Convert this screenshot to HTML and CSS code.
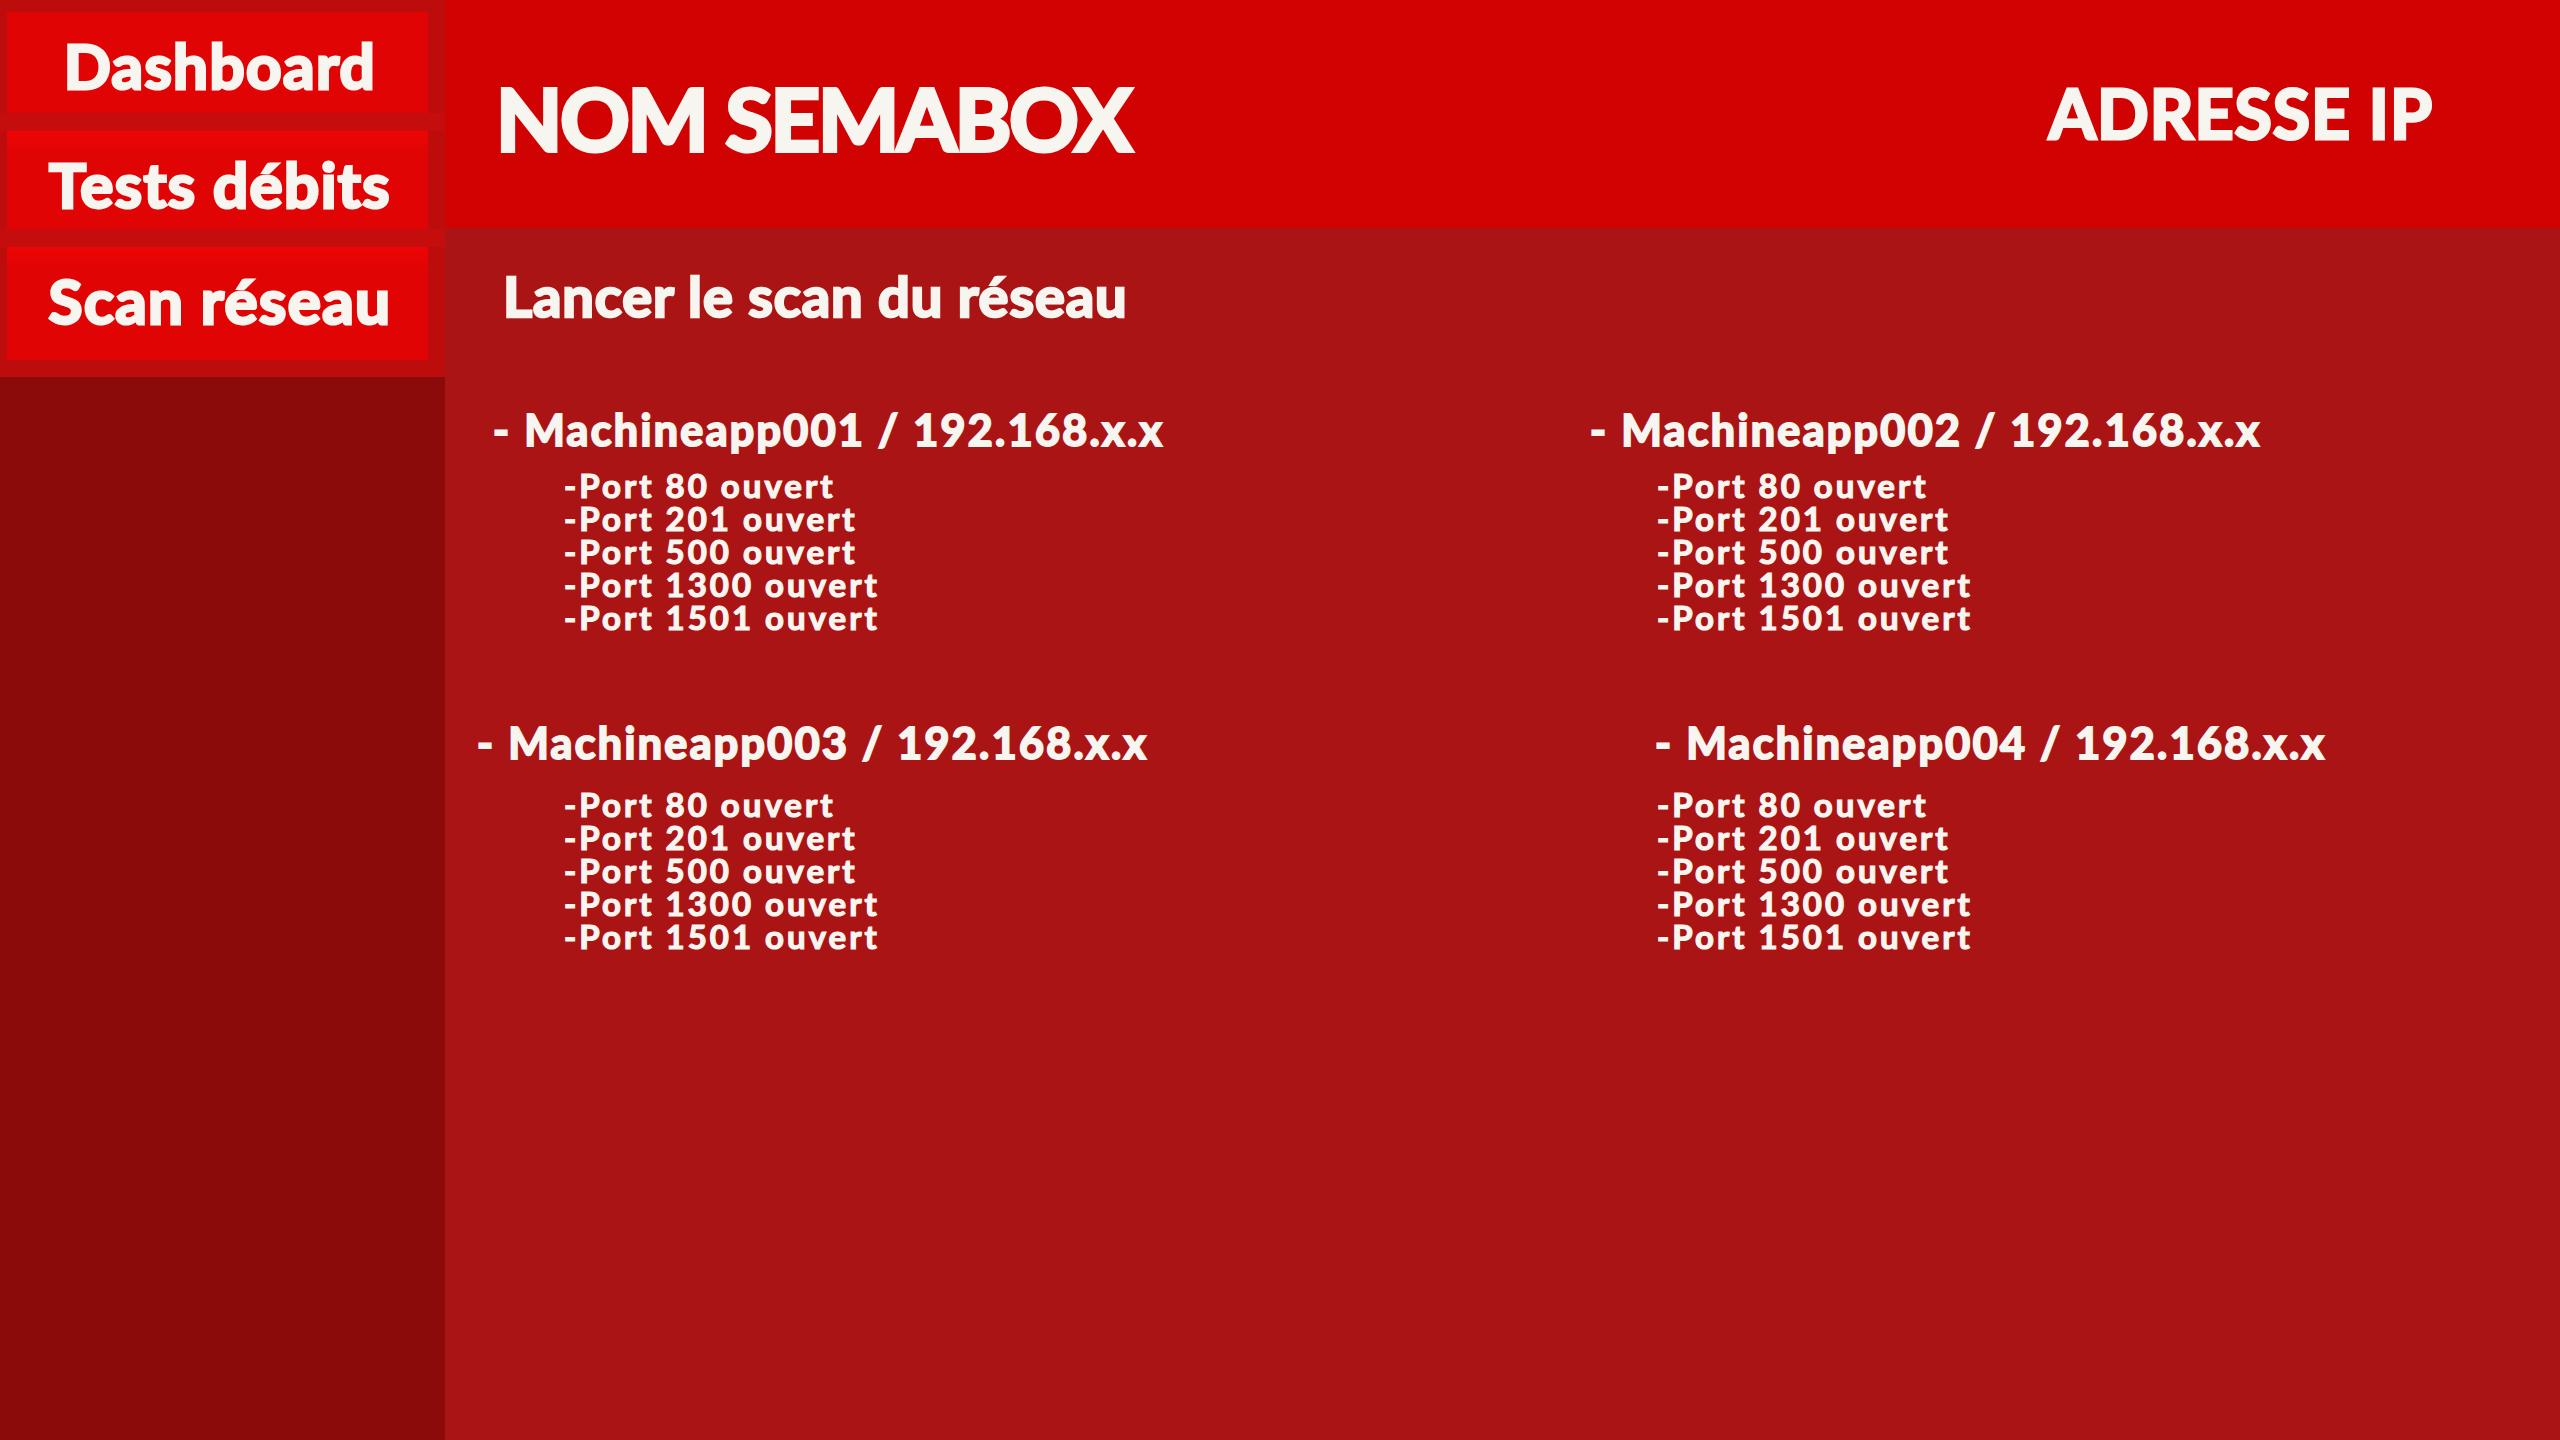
FILE: index.html
```html
<!DOCTYPE html>
<html lang="fr">
<head>
<meta charset="utf-8">
<title>Scan réseau</title>
<link rel="stylesheet" href="styles.css">
</head>
<body>
<div class="app">
  <aside class="sidebar">
    <nav class="nav">
      <div class="band band-top"></div>
      <a class="nav-btn nav-btn-1" href="#">Dashboard</a>
      <div class="band band-sep"></div>
      <a class="nav-btn nav-btn-2" href="#">Tests débits</a>
      <div class="band band-sep"></div>
      <a class="nav-btn nav-btn-3" href="#">Scan réseau</a>
      <div class="band band-bottom"></div>
    </nav>
    <div class="sidebar-fill"></div>
  </aside>
  <main class="main">
    <header class="header">
      <h1 class="box-name">NOM SEMABOX</h1>
      <div class="box-ip">ADRESSE IP</div>
    </header>
    <section class="content">
      <h2 class="scan-title">Lancer le scan du réseau</h2>
      <div class="machines">
        <div class="machine m1">
          <h3 class="machine-title">- Machineapp001 / 192.168.x.x</h3>
          <ul class="ports">
            <li>-Port 80 ouvert</li>
            <li>-Port 201 ouvert</li>
            <li>-Port 500 ouvert</li>
            <li>-Port 1300 ouvert</li>
            <li>-Port 1501 ouvert</li>
          </ul>
        </div>
        <div class="machine m2">
          <h3 class="machine-title">- Machineapp002 / 192.168.x.x</h3>
          <ul class="ports">
            <li>-Port 80 ouvert</li>
            <li>-Port 201 ouvert</li>
            <li>-Port 500 ouvert</li>
            <li>-Port 1300 ouvert</li>
            <li>-Port 1501 ouvert</li>
          </ul>
        </div>
        <div class="machine m3">
          <h3 class="machine-title">- Machineapp003 / 192.168.x.x</h3>
          <ul class="ports">
            <li>-Port 80 ouvert</li>
            <li>-Port 201 ouvert</li>
            <li>-Port 500 ouvert</li>
            <li>-Port 1300 ouvert</li>
            <li>-Port 1501 ouvert</li>
          </ul>
        </div>
        <div class="machine m4">
          <h3 class="machine-title">- Machineapp004 / 192.168.x.x</h3>
          <ul class="ports">
            <li>-Port 80 ouvert</li>
            <li>-Port 201 ouvert</li>
            <li>-Port 500 ouvert</li>
            <li>-Port 1300 ouvert</li>
            <li>-Port 1501 ouvert</li>
          </ul>
        </div>
      </div>
    </section>
  </main>
</div>
</body>
</html>
```
FILE: styles.css
```css
* { box-sizing: border-box; }
html, body { margin: 0; padding: 0; }
body {
  width: 2560px;
  height: 1440px;
  overflow: hidden;
  font-family: "Lato", "Open Sans", "Liberation Sans", sans-serif;
  font-weight: 700;
  color: #f7f5f0;
}
.app {
  display: grid;
  grid-template-columns: 445px 1fr;
  height: 1440px;
}
.sidebar {
  display: flex;
  flex-direction: column;
  background: #8b0b0b;
}
.nav {
  display: flex;
  flex-direction: column;
  background: #bc0c0c;
}
.band { width: 100%; }
.band-top { height: 12px; background: #bc0c0c; }
.band-sep { height: 18px; background: #c50d0d; }
.band-bottom { height: 17px; background: #bc0c0c; }
.nav-btn {
  display: block;
  margin: 0 17px 0 7px;
  background: linear-gradient(#ee0505 0px, #e00404 22px, #e00404 100%);
  color: #f7f5f0;
  text-decoration: none;
  text-align: center;
  font-size: 62px;
  line-height: 60px;
  letter-spacing: 1.4px;
  -webkit-text-stroke: 3px #f7f5f0;
  padding: 23px 0 0 5px;
  white-space: nowrap;
}
.nav-btn-1 { height: 101px; background: #e00404; }
.nav-btn-2 { height: 98px; }
.nav-btn-3 { height: 113px; }
.sidebar-fill { flex: 1; background: #8b0b0b; }

.main {
  display: flex;
  flex-direction: column;
  background: #ab1414;
}
.header {
  height: 228px;
  background: #d00202;
  display: flex;
  justify-content: space-between;
  align-items: flex-start;
  padding: 0 127px 0 51px;
}
.box-name {
  margin: 75px 0 0 0;
  font-size: 86px;
  line-height: 86px;
  letter-spacing: -2.1px;
  font-weight: 700;
  -webkit-text-stroke: 4px #f7f5f0;
}
.box-ip {
  margin-top: 79px;
  font-size: 68px;
  line-height: 68px;
  letter-spacing: 1px;
  -webkit-text-stroke: 3px #f7f5f0;
}
.content {
  flex: 1;
  padding: 40px 0 0 0;
}
.scan-title {
  margin: 0 0 0 58px;
  font-size: 56px;
  line-height: 56px;
  letter-spacing: 0.9px;
  font-weight: 700;
  -webkit-text-stroke: 2.5px #f7f5f0;
}
.machines {
  margin-top: 84px;
  display: grid;
  grid-template-columns: 1145px 1fr;
  row-gap: 87px;
}
.machine-title {
  margin: 0;
  font-size: 43px;
  line-height: 43px;
  letter-spacing: 2.35px;
  font-weight: 700;
  -webkit-text-stroke: 2px #f7f5f0;
  white-space: nowrap;
}
.ports {
  list-style: none;
  margin: 18px 0 0 0;
  padding: 0;
  font-size: 33px;
  line-height: 33px;
  letter-spacing: 3px;
  -webkit-text-stroke: 1.2px #f7f5f0;
  white-space: nowrap;
}
.m1 .machine-title { padding-left: 48px; }
.m1 .ports { padding-left: 119px; }
.m2 .machine-title { padding-left: 0; }
.m2 .ports { padding-left: 67px; }
.m3 .machine-title { padding-left: 32px; }
.m3 .ports { padding-left: 119px; margin-top: 24px; }
.m4 .machine-title { padding-left: 65px; }
.m4 .ports { padding-left: 67px; margin-top: 24px; }
```
